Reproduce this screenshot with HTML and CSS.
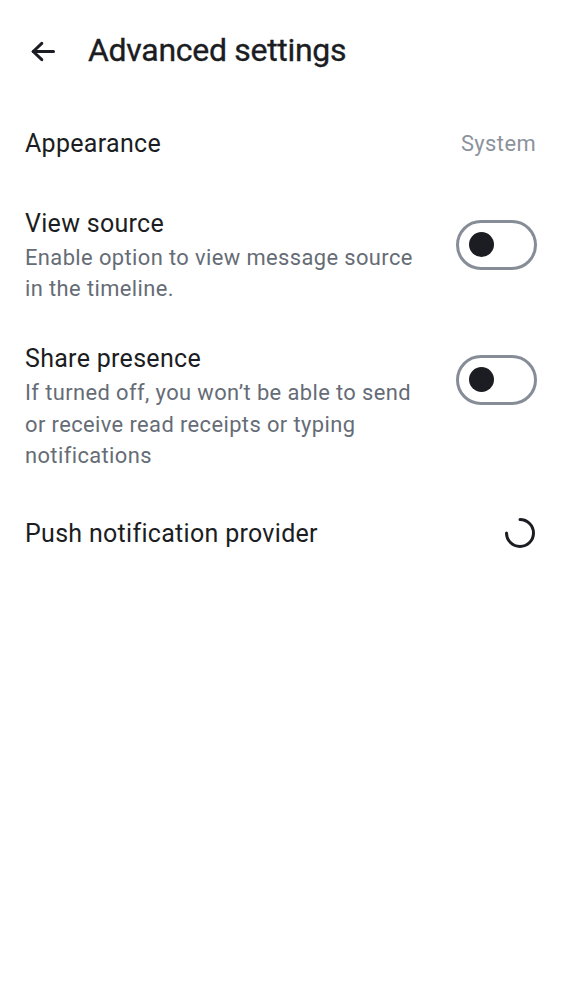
FILE: index.html
```html
<!DOCTYPE html>
<html lang="en">
<head>
<meta charset="utf-8">
<title>Advanced settings</title>
<link rel="stylesheet" href="styles.css">
</head>
<body>
<div class="screen">
  <header class="topbar">
    <button class="back" aria-label="Back">
      <svg width="38" height="38" viewBox="0 0 38 38" fill="none" stroke="#1b1d22" stroke-width="3" stroke-linecap="round" stroke-linejoin="round">
        <path d="M8.2 19.5H28.5"/>
        <path d="M16.8 11.4L8.2 19.5L16.8 27.6"/>
      </svg>
    </button>
    <h1 class="title">Advanced settings</h1>
  </header>

  <div class="row single">
    <div class="text"><div class="label">Appearance</div></div>
    <div class="value">System</div>
  </div>

  <div class="row multi">
    <div class="text">
      <div class="label">View source</div>
      <div class="desc">Enable option to view message source in the timeline.</div>
    </div>
    <div class="switch"><span class="thumb"></span></div>
  </div>

  <div class="row multi">
    <div class="text">
      <div class="label">Share presence</div>
      <div class="desc">If turned off, you won’t be able to send or receive read receipts or typing notifications</div>
    </div>
    <div class="switch"><span class="thumb"></span></div>
  </div>

  <div class="row single">
    <div class="text"><div class="label">Push notification provider</div></div>
    <svg class="spinner" width="32" height="32" viewBox="0 0 32 32" fill="none">
      <path d="M16 2.5A13.5 13.5 0 1 1 2.5 16" stroke="#1b1d22" stroke-width="3" stroke-linecap="round"/>
    </svg>
  </div>
</div>
</body>
</html>
```

FILE: styles.css
```css
html, body {
  margin: 0;
  padding: 0;
  background: #ffffff;
}

body {
  font-family: Roboto, "Noto Sans", "Liberation Sans", sans-serif;
  color: #1b1d22;
}

.screen {
  width: 562px;
  min-height: 1000px;
}

.topbar {
  height: 100px;
  display: flex;
  align-items: center;
  padding-left: 25px;
}

.back {
  width: 38px;
  height: 38px;
  padding: 0;
  border: 0;
  background: none;
  display: flex;
  align-items: center;
  justify-content: center;
  margin-top: 1px;
}

.title {
  margin: 0 0 0 25px;
  font-size: 32px;
  font-weight: 400;
  line-height: 40px;
  letter-spacing: -0.3px;
  color: #1b1d22;
  -webkit-text-stroke: 0.35px #1b1d22;
}

.row {
  display: flex;
  gap: 25px;
  padding: 0 25px;
}

.row.single {
  min-height: 87.5px;
  align-items: center;
}

.row.multi {
  align-items: flex-start;
  padding-top: 17px;
  padding-bottom: 18.5px;
}

.text {
  flex: 1;
  min-width: 0;
}

.label {
  font-size: 25px;
  line-height: 37.5px;
  letter-spacing: 0.3px;
  color: #1b1d22;
}

.desc {
  font-size: 21.9px;
  line-height: 31.2px;
  color: #656c76;
  letter-spacing: 0.4px;
}

.value {
  font-size: 21.9px;
  line-height: 31px;
  color: #8b929c;
  letter-spacing: 0.4px;
  margin-right: 1px;
}

.switch {
  flex: none;
  box-sizing: border-box;
  width: 81px;
  height: 50px;
  border: 3px solid #868d97;
  border-radius: 25px;
  margin-top: 15px;
  display: flex;
  align-items: center;
  padding-left: 9.5px;
}

.thumb {
  width: 25px;
  height: 25px;
  border-radius: 50%;
  background: #1b1d22;
}

.spinner {
  flex: none;
  margin-right: 1px;
}
```
